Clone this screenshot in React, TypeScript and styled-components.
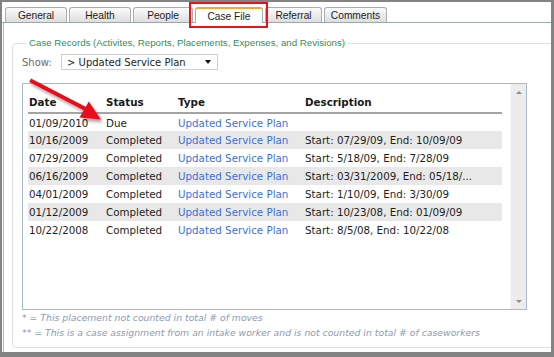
import React from "react";
import styled, { createGlobalStyle } from "styled-components";

const GlobalStyle = createGlobalStyle`
  html, body { margin: 0; padding: 0; background: #ffffff; }
  body { font-family: "DejaVu Sans", Verdana, sans-serif; }
  * { box-sizing: border-box; }
`;

const Frame = styled.div`
  position: relative;
  width: 554px;
  height: 357px;
  background: #ffffff;
  border-style: solid;
  border-color: #838383;
  border-width: 2px 3px 5px 2px;
  overflow: hidden;
  display: flex;
  flex-direction: column;
`;

const TabBar = styled.div`
  display: flex;
  align-items: flex-end;
  gap: 2px;
  height: 21px;
  padding-left: 3px;
  border-bottom: 1px solid #9ea8a8;
`;

const Tab = styled.div<{ $w: number; $active?: boolean }>`
  width: ${(p) => p.$w}px;
  height: ${(p) => (p.$active ? 16 : 15)}px;
  margin-bottom: ${(p) => (p.$active ? -1 : 0)}px;
  border: 1px solid #a9adad;
  border-bottom: none;
  border-top: ${(p) => (p.$active ? "2px solid #f0a540" : "1px solid #a9adad")};
  border-radius: 3px 3px 0 0;
  background: ${(p) =>
    p.$active ? "#ffffff" : "linear-gradient(#fbfbfb, #dedede)"};
  font-family: "Liberation Sans", Arial, sans-serif;
  font-size: 10.2px;
  color: #1c1c1c;
  display: flex;
  align-items: center;
  justify-content: center;
  padding-top: ${(p) => (p.$active ? 0 : 1)}px;
`;

const Panel = styled.div`
  flex: 1;
  margin-left: 1px;
  border-left: 1px solid #b4b4b4;
  padding: 14px 0 0 8px;
`;

const Fieldset = styled.fieldset`
  margin: 0 -40px 0 0;
  border: 1px solid #dcdce8;
  border-radius: 4px;
  padding: 0 0 7px 9px;
  min-width: 0;
`;

const Legend = styled.legend`
  margin-left: 4px;
  padding: 0 3px;
  font-family: "Liberation Sans", Arial, sans-serif;
  font-size: 9.7px;
  line-height: 12px;
  color: #2a9358;
`;

const ShowRow = styled.div`
  display: flex;
  align-items: center;
  gap: 8px;
  margin-top: 5px;
`;

const ShowLabel = styled.span`
  font-size: 10px;
  color: #6a6a6a;
  width: 31px;
`;

const Select = styled.div`
  width: 157px;
  height: 16px;
  border: 1px solid #cfcfcf;
  display: flex;
  align-items: center;
  justify-content: space-between;
  padding: 0 5px 0 5px;
  font-size: 10px;
  color: #1e1e1e;
`;

const Caret = styled.span`
  width: 0;
  height: 0;
  border-left: 3.5px solid transparent;
  border-right: 3.5px solid transparent;
  border-top: 4px solid #111;
  margin-right: 1px;
`;

const GridBox = styled.div`
  margin-top: 13px;
  width: 505px;
  height: 227px;
  border: 1px solid #a9b8cc;
  display: flex;
`;

const TableArea = styled.div`
  flex: 1;
  padding: 8px 7px 0 5px;
`;

const Table = styled.table`
  border-collapse: collapse;
  table-layout: fixed;
  width: 474px;
  font-size: 10.3px;
`;

const Th = styled.th<{ $w: number }>`
  width: ${(p) => p.$w}px;
  height: 21px;
  padding: 0 0 1px 1px;
  text-align: left;
  font-weight: bold;
  color: #1a1a1a;
  border-bottom: 2px solid #a4a4a4;
`;

const Tr = styled.tr<{ $alt: boolean }>`
  background: ${(p) => (p.$alt ? "#e8e8e8" : "transparent")};
`;

const Td = styled.td<{ $link?: boolean }>`
  height: 18px;
  padding: 0 0 0 1px;
  white-space: nowrap;
  overflow: hidden;
  color: ${(p) => (p.$link ? "#3f6fd8" : "#1e1e1e")};
`;

const Scrollbar = styled.div`
  width: 16px;
  background: #ececec;
  border-left: 1px solid #f6f6f6;
  display: flex;
  flex-direction: column;
  justify-content: space-between;
  align-items: center;
  padding: 7px 0 6px;
`;

const ArrowUp = styled.span`
  width: 0;
  height: 0;
  border-left: 3px solid transparent;
  border-right: 3px solid transparent;
  border-bottom: 3px solid #8c8c8c;
`;

const ArrowDown = styled.span`
  width: 0;
  height: 0;
  border-left: 3px solid transparent;
  border-right: 3px solid transparent;
  border-top: 3px solid #8c8c8c;
`;

const Notes = styled.div`
  padding-top: 1px;
`;

const Note = styled.div`
  font-size: 9.3px;
  line-height: 14.5px;
  font-style: italic;
  color: #8c9ab2;
  white-space: nowrap;
`;

const Highlight = styled.div`
  position: absolute;
  left: 187px;
  top: 0px;
  width: 79px;
  height: 26px;
  border: 2px solid #e8141c;
  pointer-events: none;
`;

const Overlay = styled.svg`
  position: absolute;
  left: -2px;
  top: -2px;
  pointer-events: none;
`;

const tabs = [
  { label: "General", w: 62 },
  { label: "Health", w: 62 },
  { label: "People", w: 60 },
  { label: "Case File", w: 68, active: true },
  { label: "Referral", w: 57 },
  { label: "Comments", w: 63 },
];

const rows = [
  ["01/09/2010", "Due", "Updated Service Plan", ""],
  ["10/16/2009", "Completed", "Updated Service Plan", "Start: 07/29/09, End: 10/09/09"],
  ["07/29/2009", "Completed", "Updated Service Plan", "Start: 5/18/09, End: 7/28/09"],
  ["06/16/2009", "Completed", "Updated Service Plan", "Start: 03/31/2009, End: 05/18/..."],
  ["04/01/2009", "Completed", "Updated Service Plan", "Start: 1/10/09, End: 3/30/09"],
  ["01/12/2009", "Completed", "Updated Service Plan", "Start: 10/23/08, End: 01/09/09"],
  ["10/22/2008", "Completed", "Updated Service Plan", "Start: 8/5/08, End: 10/22/08"],
];

export default function App() {
  return (
    <>
      <GlobalStyle />
      <Frame>
        <TabBar>
          {tabs.map((t) => (
            <Tab key={t.label} $w={t.w} $active={t.active}>
              {t.label}
            </Tab>
          ))}
        </TabBar>
        <Panel>
          <Fieldset>
            <Legend>Case Records (Activites, Reports, Placements, Expenses, and Revisions)</Legend>
            <ShowRow>
              <ShowLabel>Show:</ShowLabel>
              <Select>
                <span>&gt; Updated Service Plan</span>
                <Caret />
              </Select>
            </ShowRow>
            <GridBox>
              <TableArea>
                <Table>
                  <thead>
                    <tr>
                      <Th $w={77}>Date</Th>
                      <Th $w={72}>Status</Th>
                      <Th $w={127}>Type</Th>
                      <Th $w={198}>Description</Th>
                    </tr>
                  </thead>
                  <tbody>
                    {rows.map((r, i) => (
                      <Tr key={i} $alt={i % 2 === 1}>
                        <Td>{r[0]}</Td>
                        <Td>{r[1]}</Td>
                        <Td $link>{r[2]}</Td>
                        <Td>{r[3]}</Td>
                      </Tr>
                    ))}
                  </tbody>
                </Table>
              </TableArea>
              <Scrollbar>
                <ArrowUp />
                <ArrowDown />
              </Scrollbar>
            </GridBox>
            <Notes>
              <Note>* = This placement not counted in total # of moves</Note>
              <Note>** = This is a case assignment from an intake worker and is not counted in total # of caseworkers</Note>
            </Notes>
          </Fieldset>
        </Panel>
        <Highlight />
        <Overlay width="554" height="357" viewBox="0 0 554 357">
          <defs>
            <filter id="sh" x="-20%" y="-20%" width="140%" height="140%">
              <feDropShadow dx="2" dy="3" stdDeviation="1.5" floodColor="#000" floodOpacity="0.35" />
            </filter>
          </defs>
          <g filter="url(#sh)" fill="#e8101a" stroke="none">
            <path d="M31 78.5 L87 107.5 L85.2 111 L29.2 82 Z" />
            <polygon points="101,119.5 79.5,117.5 88.8,101.5" />
          </g>
        </Overlay>
      </Frame>
    </>
  );
}
